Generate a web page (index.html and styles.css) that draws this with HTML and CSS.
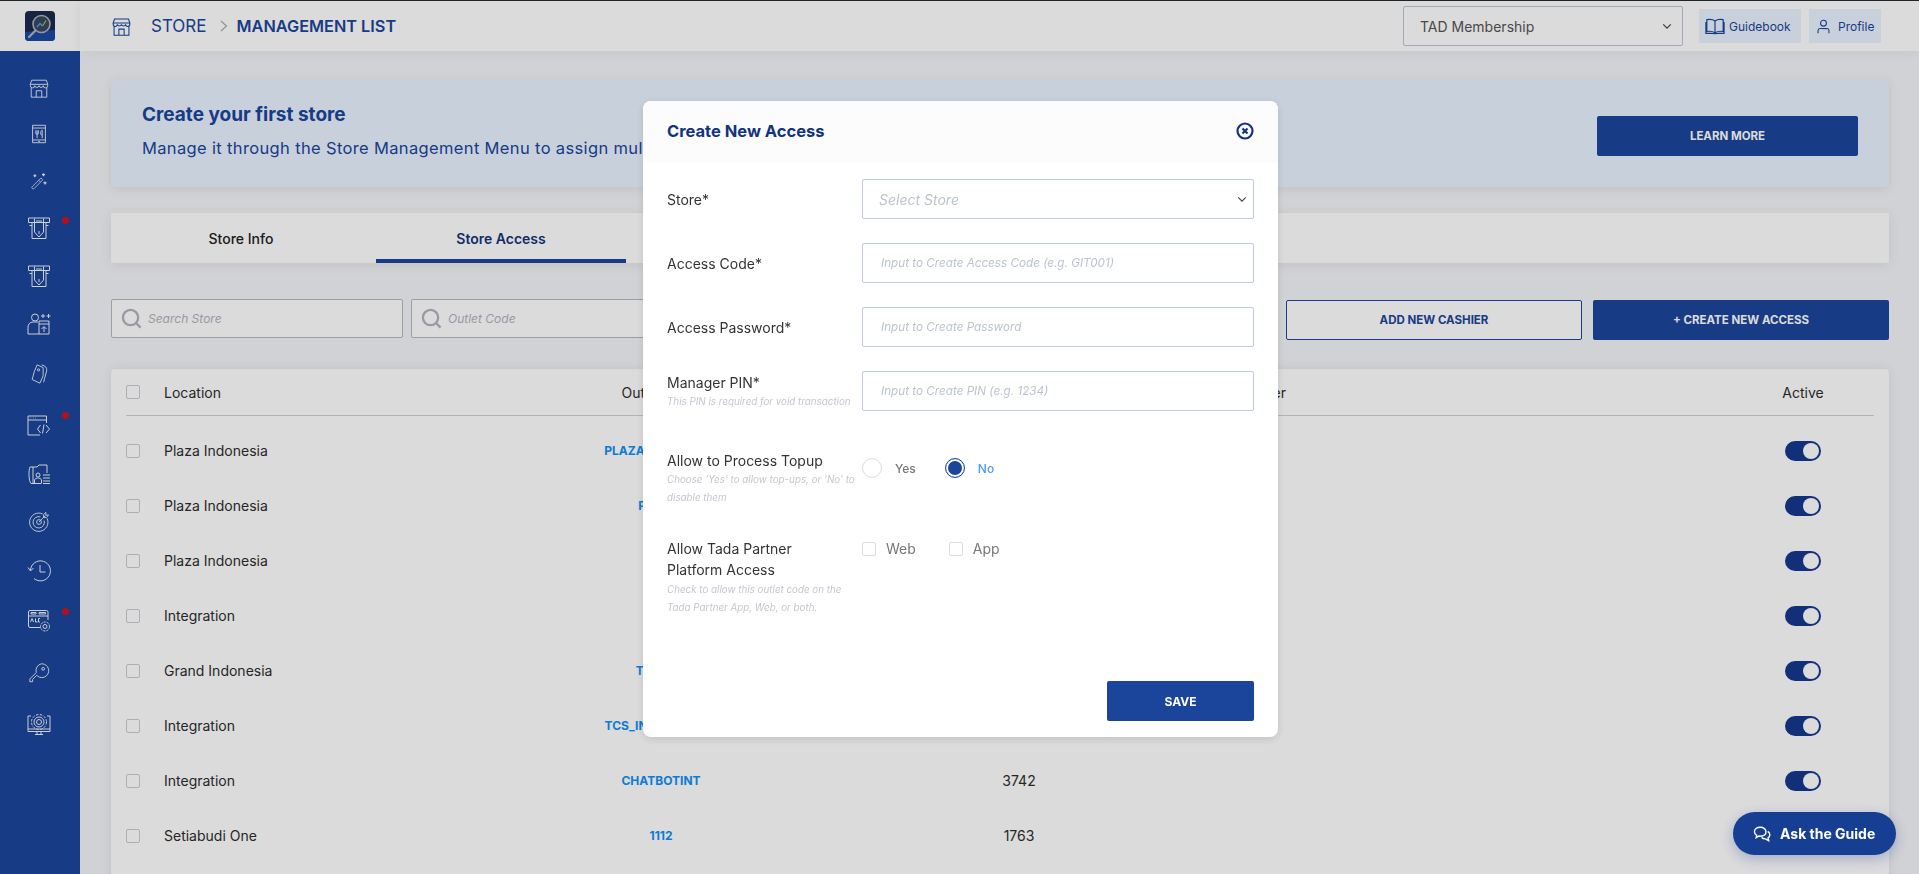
FILE: index.html
```html
<!DOCTYPE html>
<html lang="en">
<head>
    <meta charset="UTF-8">
    <meta name="viewport" content="width=device-width, initial-scale=1.0">
    <title>Store Management List</title>
    <link rel="stylesheet" href="styles.css">
</head>
<body>
    <div class="app">
        <aside class="sidebar">
            <div class="logo-cell">
                <svg class="logo" viewBox="0 0 30 30">
                    <rect width="30" height="30" rx="4" fill="#1b2a4c"/>
                    <path d="M0 21 L30 19 V26 a4 4 0 0 1 -4 4 H4 a4 4 0 0 1 -4 -4 Z" fill="#1d48a0"/>
                    <circle cx="16.5" cy="13" r="8.5" fill="#39465f" stroke="#aab2bf" stroke-width="1.6"/>
                    <path d="M10.5 19.5 L4 26" stroke="#aab2bf" stroke-width="2.4" stroke-linecap="round"/>
                    <path d="M12 16 L15 12.5 L17.5 15" fill="none" stroke="#5aa0e0" stroke-width="1.2"/>
                    <path d="M17.5 15 L21 9.5" fill="none" stroke="#9cc24a" stroke-width="1.2"/>
                </svg>
            </div>
            <nav class="side-nav">
                <a class="side-item">
                    <svg class="side-icon" viewBox="0 0 24 24">
                        <path d="M4 3.5 H20 L21.5 8 H2.5 Z M2.5 8 v1.5 a2.4 2.4 0 0 0 4.8 0 a2.4 2.4 0 0 0 4.7 0 a2.4 2.4 0 0 0 4.7 0 a2.4 2.4 0 0 0 4.8 0 V8 M3.5 12 V22 H20.5 V12 M9 22 V15 H15 V22"/>
                    </svg>
                </a>
                <a class="side-item">
                    <svg class="side-icon" viewBox="0 0 24 24">
                        <path d="M5 2.5 H19 V21.5 H5 Z M5 5.5 H19 M5 18.5 H19 M11 20 H13 M8.5 8 V11 a1.4 1.4 0 0 0 2.8 0 V8 M9.9 8 V16.5 M15 8 c-1.5 1 -1.5 4 -.5 5 H15.5 V8 Z M15.5 13 V16.5"/>
                    </svg>
                </a>
                <a class="side-item">
                    <svg class="side-icon icon-small" viewBox="0 0 24 24">
                        <path d="M3 19.5 L13.5 9 a1.6 1.6 0 0 1 2.5 2.5 L5.5 22 a1.6 1.6 0 0 1 -2.5 -2.5 Z M11.5 11 L14 13.5"/>
                        <path d="M6.5 3 V7 M4.5 5 H8.5 M18 1.5 V5.5 M16 3.5 H20 M20 12.5 V16.5 M18 14.5 H22" stroke-width="1.6"/>
                    </svg>
                </a>
                <a class="side-item has-dot">
                    <svg class="side-icon icon-wide" viewBox="0 0 24 24">
                        <path d="M1.5 2 H22.5 V6.5 H1.5 Z M5 6.5 V22.5 H19 V6.5 M7.5 2.5 V16 L12 21 L16.5 16 V2.5 M2.5 9.5 H5 M19 9.5 H21.5 M9 5 H15 M12 18 V15"/>
                    </svg>
                </a>
                <a class="side-item">
                    <svg class="side-icon icon-wide" viewBox="0 0 24 24">
                        <path d="M1.5 2 H22.5 V6.5 H1.5 Z M5 6.5 V22.5 H19 V6.5 M7.5 2.5 V16 L12 21 L16.5 16 V2.5 M2.5 9.5 H5 M19 9.5 H21.5 M9 5 H15 M12 18 V15"/>
                    </svg>
                </a>
                <a class="side-item">
                    <svg class="side-icon icon-wide" viewBox="0 0 24 24">
                        <circle cx="8" cy="5.5" r="3.5"/>
                        <path d="M1 22 V15 a5 5 0 0 1 5 -5 H11 M1 22 H22 V12 H12 V22 M12 12 V9 H22 V12 M17 20 V15 M14.5 17 L17 14.5 L19.5 17 M14 4 H18 M16 2 V6 M19.5 4 H23.5 M21.5 2 V6"/>
                    </svg>
                </a>
                <a class="side-item">
                    <svg class="side-icon" viewBox="0 0 24 24">
                        <path d="M10 2 L16.5 5 V14 L13 22 L4.5 18 L7 9 Z"/>
                        <circle cx="11.5" cy="7.5" r="1.2"/>
                        <path d="M15 2 C19 3 20.5 5 20.5 8 L17 21"/>
                    </svg>
                </a>
                <a class="side-item has-dot">
                    <svg class="side-icon icon-wide" viewBox="0 0 24 24">
                        <path d="M19.5 10 V3 H1 V22 H13 M1 7 H19.5 M3.5 5 H4 M6 5 H6.5 M8.5 5 H9 M13.5 12 L10.5 16 L13.5 20 M19 12 L22.5 16 L19 20 M17 11.5 L15.5 20.5"/>
                    </svg>
                </a>
                <a class="side-item">
                    <svg class="side-icon icon-wide" viewBox="0 0 24 24">
                        <path d="M3 5 H10 L12 3 H20 V11 M3 5 C1.5 8 1.5 19 4 21.5 H14 M6 5 V21"/>
                        <circle cx="11" cy="13" r="2"/>
                        <path d="M7.5 21.5 V18 a3 3 0 0 1 3 -2 H11.5 a3 3 0 0 1 3 2 V21.5 M16 13 H23 M16 16 H23 M16 19 H23 M16 21.5 H23"/>
                    </svg>
                </a>
                <a class="side-item">
                    <svg class="side-icon" viewBox="0 0 24 24">
                        <path d="M16 3.2 A10 10 0 1 0 20.8 8 M13.5 6.4 A6.2 6.2 0 1 0 17.6 10.5"/>
                        <circle cx="12" cy="12" r="2.6"/>
                        <path d="M12 12 L19 5 M17 4 V7 H20 L22.5 4.5 H19.5 V1.5 Z"/>
                    </svg>
                </a>
                <a class="side-item">
                    <svg class="side-icon icon-wide" viewBox="0 0 24 24">
                        <path d="M3.5 12 A10 10 0 1 1 7 20.5 M1 9.5 L3.5 13 L6.5 10 M13 7 V14 H18.5"/>
                    </svg>
                </a>
                <a class="side-item has-dot">
                    <svg class="side-icon icon-wide" viewBox="0 0 24 24">
                        <path d="M13.5 18.5 H3 a1.5 1.5 0 0 1 -1.5 -1.5 V3 A1.5 1.5 0 0 1 3 1.5 H19.5 A1.5 1.5 0 0 1 21 3 V11 M1.5 7 H21 M4 3.5 H9 V5 H4 Z M12 3.5 H18.5 V5 H12 Z M3.5 13 L5 9.5 L6.5 13 M8.5 9.5 V13 H10.5 M13 9.5 H11.5 V13 H13"/>
                        <circle cx="18" cy="17.5" r="2"/>
                        <circle cx="18" cy="17.5" r="4.5" stroke-dasharray="2.2 1"/>
                    </svg>
                </a>
                <a class="side-item">
                    <svg class="side-icon" viewBox="0 0 24 24">
                        <path d="M14.5 2 a7.5 7.5 0 1 1 -5 12.5 L5 19 V21.5 H2 V18.5 L9 11.5 A7.5 7.5 0 0 1 14.5 2 Z"/>
                        <circle cx="16.5" cy="7.5" r="1.5"/>
                    </svg>
                </a>
                <a class="side-item">
                    <svg class="side-icon icon-wide" viewBox="0 0 24 24">
                        <path d="M4 3 H1 V18.5 H23 V3 H20 M1 16 H23 M8 21.5 H16 M10 18.5 V21.5 M14 18.5 V21.5"/>
                        <circle cx="12" cy="9" r="2.5"/>
                        <circle cx="12" cy="9" r="5"/>
                        <circle cx="12" cy="9" r="7.5" stroke-dasharray="2.5 1.5"/>
                    </svg>
                </a>
            </nav>
        </aside>

        <div class="content">
            <header class="topbar">
                <div class="crumbs">
                    <svg class="crumb-icon" viewBox="0 0 24 24">
                        <path d="M4 3.5 H20 L21.5 8 H2.5 Z M2.5 8 v1.5 a2.4 2.4 0 0 0 4.8 0 a2.4 2.4 0 0 0 4.7 0 a2.4 2.4 0 0 0 4.7 0 a2.4 2.4 0 0 0 4.8 0 V8 M3.5 12 V22 H20.5 V12 M9 22 V15 H15 V22"/>
                    </svg>
                    <span class="crumb">STORE</span>
                    <svg class="crumb-arrow" viewBox="0 0 8 12"><path d="M1 1 L6.5 6 L1 11"/></svg>
                    <span class="crumb crumb-current">MANAGEMENT LIST</span>
                </div>
                <div class="top-actions">
                    <div class="top-select">
                        <span>TAD Membership</span>
                        <svg class="chevron" viewBox="0 0 12 8"><path d="M1.5 1.5 L6 6 L10.5 1.5"/></svg>
                    </div>
                    <a class="top-link link-guide">
                        <svg class="top-icon" viewBox="0 0 22 18">
                            <path d="M11 3 C8.5 1 5 1 2 1.5 V14.5 C5 14 8.5 14 11 16 C13.5 14 17 14 20 14.5 V1.5 C17 1 13.5 1 11 3 Z M11 3 V16 M1 4 V16.5 H8 L11 17 L14 16.5 H21 V4"/>
                        </svg>
                        Guidebook
                    </a>
                    <a class="top-link link-profile">
                        <svg class="top-icon" viewBox="0 0 18 18">
                            <circle cx="9" cy="5" r="3.5"/>
                            <path d="M2.5 17 V13.5 a2.5 2.5 0 0 1 2.5 -2 H13 a2.5 2.5 0 0 1 2.5 2 V17"/>
                        </svg>
                        Profile
                    </a>
                </div>
            </header>

            <main class="main">
                <section class="banner">
                    <div class="banner-text">
                        <h2>Create your first store</h2>
                        <p>Manage it through the Store Management Menu to assign multiple</p>
                    </div>
                    <a class="btn btn-primary btn-learn">LEARN MORE</a>
                </section>

                <div class="tabs">
                    <a class="tab">Store Info</a>
                    <a class="tab tab-active">Store Access</a>
                </div>

                <div class="filters">
                    <label class="search-box">
                        <svg class="search-icon" viewBox="0 0 22 22"><circle cx="10" cy="10" r="8"/><path d="M16 16 L20.5 20.5"/></svg>
                        <span>Search Store</span>
                    </label>
                    <label class="search-box">
                        <svg class="search-icon" viewBox="0 0 22 22"><circle cx="10" cy="10" r="8"/><path d="M16 16 L20.5 20.5"/></svg>
                        <span>Outlet Code</span>
                    </label>
                    <div class="filter-actions">
                        <a class="btn btn-outline">ADD NEW CASHIER</a>
                        <a class="btn btn-primary">+ CREATE NEW ACCESS</a>
                    </div>
                </div>

                <section class="table-card">
                    <div class="row row-head">
                        <span class="check"></span>
                        <span>Location</span>
                        <span class="cell-center">Outlet Code</span>
                        <span></span>
                        <span class="cell-end">Cashier</span>
                        <span></span>
                        <span class="cell-center">Active</span>
                    </div>
                    <div class="rows">
                        <div class="row">
                            <span class="check"></span><span>Plaza Indonesia</span>
                            <a class="code">PLAZA_INDONESIA</a><span></span>
                            <span></span><span></span>
                            <span class="cell-center"><i class="toggle"></i></span>
                        </div>
                        <div class="row">
                            <span class="check"></span><span>Plaza Indonesia</span>
                            <a class="code">PI_0021</a><span></span>
                            <span></span><span></span>
                            <span class="cell-center"><i class="toggle"></i></span>
                        </div>
                        <div class="row">
                            <span class="check"></span><span>Plaza Indonesia</span>
                            <span></span><span></span>
                            <span></span><span></span>
                            <span class="cell-center"><i class="toggle"></i></span>
                        </div>
                        <div class="row">
                            <span class="check"></span><span>Integration</span>
                            <span></span><span></span>
                            <span></span><span></span>
                            <span class="cell-center"><i class="toggle"></i></span>
                        </div>
                        <div class="row">
                            <span class="check"></span><span>Grand Indonesia</span>
                            <a class="code">TI_GI001</a><span></span>
                            <span></span><span></span>
                            <span class="cell-center"><i class="toggle"></i></span>
                        </div>
                        <div class="row">
                            <span class="check"></span><span>Integration</span>
                            <a class="code">TCS_INTEGRATION</a><span></span>
                            <span></span><span></span>
                            <span class="cell-center"><i class="toggle"></i></span>
                        </div>
                        <div class="row">
                            <span class="check"></span><span>Integration</span>
                            <a class="code">CHATBOTINT</a><span class="cell-center">3742</span>
                            <span></span><span></span>
                            <span class="cell-center"><i class="toggle"></i></span>
                        </div>
                        <div class="row">
                            <span class="check"></span><span>Setiabudi One</span>
                            <a class="code">1112</a><span class="cell-center">1763</span>
                            <span></span><span></span>
                            <span class="cell-center"><i class="toggle"></i></span>
                        </div>
                    </div>
                </section>
            </main>
        </div>
    </div>

    <div class="overlay">
        <div class="modal">
            <div class="modal-head">
                <h3>Create New Access</h3>
                <svg class="modal-close" viewBox="0 0 18 18">
                    <circle cx="9" cy="9" r="7.5"/>
                    <path d="M6.5 6.5 L11.5 11.5 M11.5 6.5 L6.5 11.5"/>
                </svg>
            </div>
            <div class="modal-body">
                <div class="form-row">
                    <div class="form-label">Store*</div>
                    <div class="field field-select">
                        <span>Select Store</span>
                        <svg class="chevron" viewBox="0 0 12 8"><path d="M1.5 1.5 L6 6 L10.5 1.5"/></svg>
                    </div>
                </div>
                <div class="form-row">
                    <div class="form-label">Access Code*</div>
                    <div class="field">Input to Create Access Code (e.g. GIT001)</div>
                </div>
                <div class="form-row">
                    <div class="form-label">Access Password*</div>
                    <div class="field">Input to Create Password</div>
                </div>
                <div class="form-row">
                    <div class="form-label">
                        Manager PIN*
                        <small>This PIN is required for void transaction</small>
                    </div>
                    <div class="field">Input to Create PIN (e.g. 1234)</div>
                </div>
                <div class="form-row row-topup">
                    <div class="form-label">
                        Allow to Process Topup
                        <small>Choose 'Yes' to allow top-ups, or 'No' to disable them</small>
                    </div>
                    <div class="options options-radio">
                        <span class="radio"></span><span class="radio-text">Yes</span>
                        <span class="radio radio-on"></span><span class="radio-text radio-text-on">No</span>
                    </div>
                </div>
                <div class="form-row row-platform">
                    <div class="form-label">
                        Allow Tada Partner<br>Platform Access
                        <small>Check to allow this outlet code on the Tada Partner App, Web, or both.</small>
                    </div>
                    <div class="options options-check">
                        <span class="box"></span><span class="box-text">Web</span>
                        <span class="box"></span><span class="box-text">App</span>
                    </div>
                </div>
                <div class="modal-foot">
                    <a class="btn btn-primary btn-save">SAVE</a>
                </div>
            </div>
        </div>
    </div>

    <a class="ask-guide">
        <svg class="ask-icon" viewBox="0 0 20 18">
            <path d="M8 1.5 C4 1.5 1.5 3.7 1.5 6.5 C1.5 8.3 2.5 9.7 4 10.6 L3.5 13 L6.5 11.3 C7 11.4 7.5 11.5 8 11.5 C12 11.5 14.5 9.3 14.5 6.5 C14.5 3.7 12 1.5 8 1.5 Z"/>
            <path d="M16.5 6 C18 7 18.8 8.3 18.8 9.8 C18.8 11.3 18 12.5 16.8 13.3 L17.5 16.5 L13.8 14.5 C12 14.5 10.5 14 9.5 13"/>
        </svg>
        Ask the Guide
    </a>
</body>
</html>
```

FILE: styles.css
```css
* {
    box-sizing: border-box;
}

html, body {
    height: 100%;
}

body {
    margin: 0;
    overflow: hidden;
    font-family: Inter, "Noto Sans", sans-serif;
    font-size: 14px;
    color: #2d2d2d;
    background: #f4f5f8;
}

a {
    text-decoration: none;
}

svg {
    fill: none;
    stroke: currentColor;
    flex-shrink: 0;
}

.app {
    display: flex;
    height: 100vh;
    border-top: 1px solid #222c2f;
}

/* Sidebar */
.sidebar {
    width: 80px;
    flex-shrink: 0;
    background: #1b459b;
    display: flex;
    flex-direction: column;
}

.logo-cell {
    height: 50px;
    background: #fff;
    display: flex;
    justify-content: center;
    align-items: center;
}

.logo {
    width: 30px;
    height: 30px;
    stroke: none;
}

.side-nav {
    display: grid;
    grid-template-columns: 1fr;
    grid-template-rows: 46px 46px 47px 48px 48px 48px 51px 51px 48px 47px 50px 52px 52px 52px;
    padding-top: 14px;
}

.side-item {
    position: relative;
    display: flex;
    justify-content: center;
    align-items: center;
    padding-right: 2px;
    color: #eef1f7;
}

.side-icon {
    width: 22px;
    height: 22px;
    stroke-width: 1;
}

.icon-small {
    width: 18px;
    height: 18px;
}

.icon-wide {
    width: 24px;
    height: 24px;
}

.has-dot::after {
    content: "";
    position: absolute;
    top: 13px;
    left: 62px;
    width: 7px;
    height: 7px;
    border-radius: 50%;
    background: #d21320;
}

/* Top bar */
.content {
    flex: 1;
    min-width: 0;
    display: flex;
    flex-direction: column;
}

.topbar {
    height: 50px;
    flex-shrink: 0;
    background: #fff;
    box-shadow: 0 2px 12px rgba(0, 0, 0, 0.06);
    display: flex;
    justify-content: space-between;
    align-items: center;
    padding: 0 38px 0 31px;
    position: relative;
}

.crumbs {
    display: flex;
    align-items: center;
    color: #1b459b;
    font-size: 17px;
}

.crumb-icon {
    width: 21px;
    height: 21px;
    stroke-width: 1.2;
    margin-right: 19px;
}

.crumb-arrow {
    width: 8px;
    height: 12px;
    margin: 0 9px 0 13px;
    color: #aaa;
    stroke-width: 1.2;
}

.crumb-current {
    font-size: 16.3px;
    font-weight: 600;
}

.top-actions {
    display: flex;
    align-items: center;
}

.top-select {
    width: 280px;
    height: 40px;
    margin-right: 16px;
    padding: 0 10px 0 16px;
    border: 1px solid #bcc7d6;
    border-radius: 2px;
    background: #fff;
    display: flex;
    justify-content: space-between;
    align-items: center;
    font-size: 14px;
    color: #555;
}

.chevron {
    width: 10px;
    height: 7px;
    color: #444;
    stroke-width: 1.4;
}

.top-link {
    height: 34px;
    background: #e9f4ff;
    color: #1b459b;
    font-size: 12px;
    display: flex;
    align-items: center;
    gap: 4px;
}

.link-guide {
    width: 102px;
    padding-left: 6px;
    margin-right: 8px;
}

.link-profile {
    width: 72px;
    padding-left: 7px;
    gap: 7px;
}

.top-icon {
    width: 20px;
    height: 17px;
    stroke-width: 1.3;
}

.link-profile .top-icon {
    width: 15px;
}

/* Page */
.main {
    flex: 1;
    padding: 28px 30px 0 31px;
    min-height: 0;
}

.banner {
    height: 108px;
    padding: 0 31px;
    background: #e9f4ff;
    border-radius: 4px;
    box-shadow: 0 2px 12px rgba(0, 0, 0, 0.08);
    display: flex;
    justify-content: space-between;
    align-items: center;
}

.banner-text {
    padding-bottom: 4px;
}

.banner-text h2 {
    margin: 0 0 12px;
    font-size: 19px;
    line-height: 22px;
    font-weight: 700;
    color: #1b459b;
}

.banner-text p {
    margin: 0;
    font-size: 16.5px;
    letter-spacing: 0.35px;
    white-space: nowrap;
    color: #1b459b;
}

.btn {
    display: flex;
    justify-content: center;
    align-items: center;
    width: 296px;
    height: 40px;
    border-radius: 2px;
    font-size: 11.5px;
    font-weight: 700;
}

.btn-primary {
    background: #1b459b;
    color: #fff;
}

.btn-outline {
    background: #fff;
    color: #1b459b;
    border: 1px solid #1b459b;
}

.btn-learn {
    width: 261px;
    margin-top: 6px;
}

.tabs {
    height: 50px;
    margin-top: 26px;
    padding-left: 5px;
    background: #fff;
    box-shadow: 0 2px 12px rgba(0, 0, 0, 0.08);
    display: flex;
    gap: 10px;
}

.tab {
    width: 250px;
    display: flex;
    justify-content: center;
    align-items: center;
    font-weight: 500;
    color: #222;
}

.tab-active {
    color: #12337a;
    font-weight: 600;
    border-bottom: 4px solid #1b459b;
    padding-top: 4px;
}

.filters {
    display: flex;
    gap: 8px;
    margin-top: 37px;
}

.search-box {
    width: 292px;
    height: 39px;
    margin-top: -1px;
    border: 1px solid #b4b8c3;
    border-radius: 2px;
    background: #fff;
    display: flex;
    align-items: center;
    gap: 6px;
    padding-left: 9px;
    font-size: 12px;
    font-style: italic;
    color: #b0b4bf;
}

.search-icon {
    width: 21px;
    height: 21px;
    stroke-width: 2.4;
    color: #b0b4bf;
}

.filter-actions {
    margin-left: auto;
    display: flex;
    gap: 11px;
}

/* Table */
.table-card {
    margin-top: 29px;
    height: 600px;
    background: #fff;
    border-radius: 4px;
    box-shadow: 0 0 12px rgba(0, 0, 0, 0.08);
    padding: 0 15px;
}

.row {
    display: grid;
    grid-template-columns: 38px 380px 234px 482px 26px 1fr 116px;
    align-items: center;
    height: 55px;
    padding-right: 13px;
    font-size: 14px;
}

.row-head {
    height: 47px;
    border-bottom: 1px solid #d2d2d2;
}

.rows {
    padding-top: 7px;
}

.check {
    width: 14px;
    height: 14px;
    border: 1px solid #c9ccd3;
    border-radius: 2px;
    background: #fff;
}

.cell-center {
    text-align: center;
}

.cell-end {
    justify-self: end;
    white-space: nowrap;
}

.code {
    text-align: center;
    white-space: nowrap;
    font-size: 12px;
    font-weight: 700;
    color: #0f90f5;
}

.toggle {
    display: inline-block;
    vertical-align: middle;
    width: 36px;
    height: 20px;
    border-radius: 10px;
    background: #16398f;
    position: relative;
}

.toggle::after {
    content: "";
    position: absolute;
    top: 2px;
    right: 2px;
    width: 16px;
    height: 16px;
    border-radius: 50%;
    background: #fff;
}

/* Modal */
.overlay {
    position: fixed;
    top: 0;
    left: 0;
    right: 0;
    bottom: 0;
    background: rgba(0, 0, 0, 0.14);
}

.modal {
    position: absolute;
    top: 101px;
    left: 643px;
    width: 635px;
    height: 636px;
    background: #fff;
    border-radius: 8px;
    box-shadow: 0 2px 8px rgba(0, 0, 0, 0.12);
    overflow: hidden;
}

.modal-head {
    height: 62px;
    padding: 0 24px 2px;
    background: #fcfcfd;
    display: flex;
    justify-content: space-between;
    align-items: center;
}

.modal-head h3 {
    margin: 0;
    font-size: 16.5px;
    font-weight: 700;
    color: #12337f;
}

.modal-close {
    width: 18px;
    height: 18px;
    color: #12337f;
    stroke-width: 2.2;
}

.modal-body {
    padding: 16px 24px 0;
}

.form-row {
    display: flex;
    align-items: center;
    min-height: 40px;
    margin-bottom: 24px;
}

.form-label {
    width: 195px;
    flex-shrink: 0;
    font-size: 14px;
    line-height: 21px;
    color: #333;
}

.form-label small {
    display: block;
    max-width: 190px;
    font-size: 9.8px;
    line-height: 18px;
    font-style: italic;
    color: #c4c7cf;
}

.field {
    flex: 1;
    height: 40px;
    border: 1px solid #bfcbdb;
    border-radius: 2px;
    display: flex;
    align-items: center;
    padding-left: 18px;
    font-size: 11.7px;
    font-style: italic;
    color: #bcc3d0;
}

.field-select {
    justify-content: space-between;
    padding: 0 6px 0 16px;
    font-size: 14px;
}

.row-topup {
    align-items: flex-start;
    margin: 39px 0 31px;
}

.options {
    display: flex;
    align-items: center;
    font-size: 12px;
    font-weight: 500;
}

.options-radio {
    padding-top: 8px;
}

.radio {
    width: 20px;
    height: 20px;
    border-radius: 50%;
    border: 1px solid #d8dce4;
    background: #fff;
}

.radio-on {
    border-color: #1b459b;
    box-shadow: inset 0 0 0 2px #fff, inset 0 0 0 10px #1b459b;
}

.radio-text {
    margin: 0 29px 0 13px;
    color: #777;
}

.radio-text-on {
    margin-right: 0;
    color: #4a9df0;
}

.row-platform {
    align-items: flex-start;
    margin-bottom: 0;
}

.row-platform small {
    margin-top: 1px;
}

.options-check {
    font-size: 14px;
    font-weight: 400;
    height: 21px;
}

.box {
    width: 14px;
    height: 14px;
    border: 1px solid #d8dce4;
    border-radius: 2px;
    background: #fff;
}

.box-text {
    margin: 0 33px 0 10px;
    color: #777;
}

.modal-foot {
    display: flex;
    justify-content: flex-end;
    margin-top: 64px;
}

.btn-save {
    width: 147px;
    font-size: 12px;
}

/* Floating guide button */
.ask-guide {
    position: fixed;
    left: 1733px;
    top: 812px;
    width: 163px;
    height: 43px;
    border-radius: 22px;
    background: #163e93;
    box-shadow: 0 4px 14px rgba(22, 62, 147, 0.3);
    color: #fff;
    font-size: 14px;
    font-weight: 700;
    display: flex;
    align-items: center;
    padding-left: 20px;
    gap: 9px;
}

.ask-icon {
    width: 18px;
    height: 16px;
    stroke-width: 1.6;
}
```
